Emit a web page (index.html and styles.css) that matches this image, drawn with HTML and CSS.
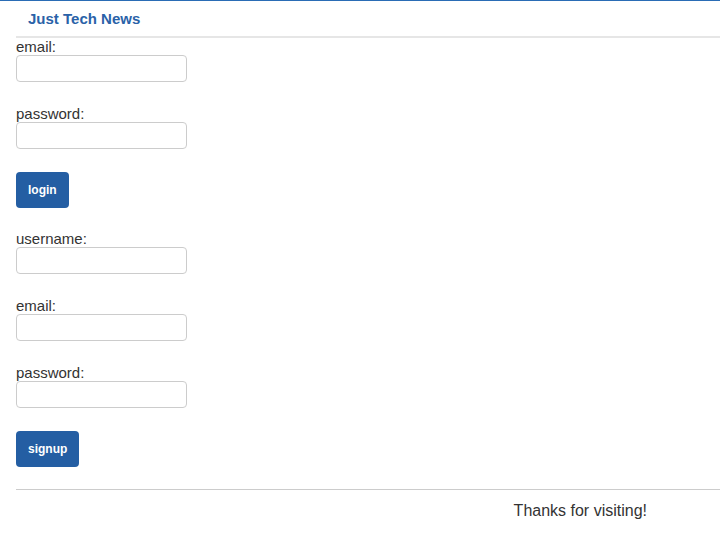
FILE: index.html
```html
<!DOCTYPE html>
<html>
<head>
<meta charset="utf-8">
<link rel="stylesheet" href="styles.css">
</head>
<body>
<header class="site-header">
  <h1 class="brand">Just Tech News</h1>
</header>
<main class="content">
  <form class="form">
    <div class="field">
      <label class="label">email:</label>
      <input class="input" type="text">
    </div>
    <div class="field">
      <label class="label">password:</label>
      <input class="input" type="password">
    </div>
    <button class="btn" type="button">login</button>
  </form>
  <form class="form">
    <div class="field">
      <label class="label">username:</label>
      <input class="input" type="text">
    </div>
    <div class="field">
      <label class="label">email:</label>
      <input class="input" type="text">
    </div>
    <div class="field">
      <label class="label">password:</label>
      <input class="input" type="password">
    </div>
    <button class="btn" type="button">signup</button>
  </form>
</main>
<footer class="site-footer">
  <p class="thanks">Thanks for visiting!</p>
</footer>
</body>
</html>
```

FILE: styles.css
```css
html, body {
  margin: 0;
  padding: 0;
}
body {
  border-top: 1px solid #2a6cb5;
  font-family: "Liberation Sans", Arial, sans-serif;
  color: #333;
  background: #fff;
}
.site-header {
  margin-left: 16px;
  border-bottom: 2px solid #e6e6e6;
  height: 35px;
  display: flex;
  align-items: center;
}
.brand {
  margin: 0 0 0 12px;
  font-size: 15px;
  font-weight: bold;
  color: #2a62a8;
}
.content {
  padding-left: 16px;
}
.form {
  margin: 0;
}
.form + .form {
  margin-top: 22px;
}
.field {
  display: flex;
  flex-direction: column;
  margin-bottom: 23px;
}
.label {
  font-size: 15px;
  line-height: 17px;
}
.input {
  box-sizing: border-box;
  width: 171px;
  height: 27px;
  margin: 0;
  border: 1px solid #ccc;
  border-radius: 4px;
  padding: 0 6px;
  font-family: inherit;
}
.btn {
  display: block;
  box-sizing: border-box;
  height: 36px;
  padding: 0 12px;
  border: none;
  border-radius: 4px;
  background: #245ea3;
  color: #fff;
  font-family: "Liberation Sans", Arial, sans-serif;
  font-size: 12px;
  font-weight: bold;
  margin: 0;
}
.site-footer {
  margin: 22px 0 0 16px;
  border-top: 1px solid #ccc;
}
.thanks {
  margin: 0;
  padding: 12px 73px 0 0;
  text-align: right;
  font-size: 16px;
}
```
